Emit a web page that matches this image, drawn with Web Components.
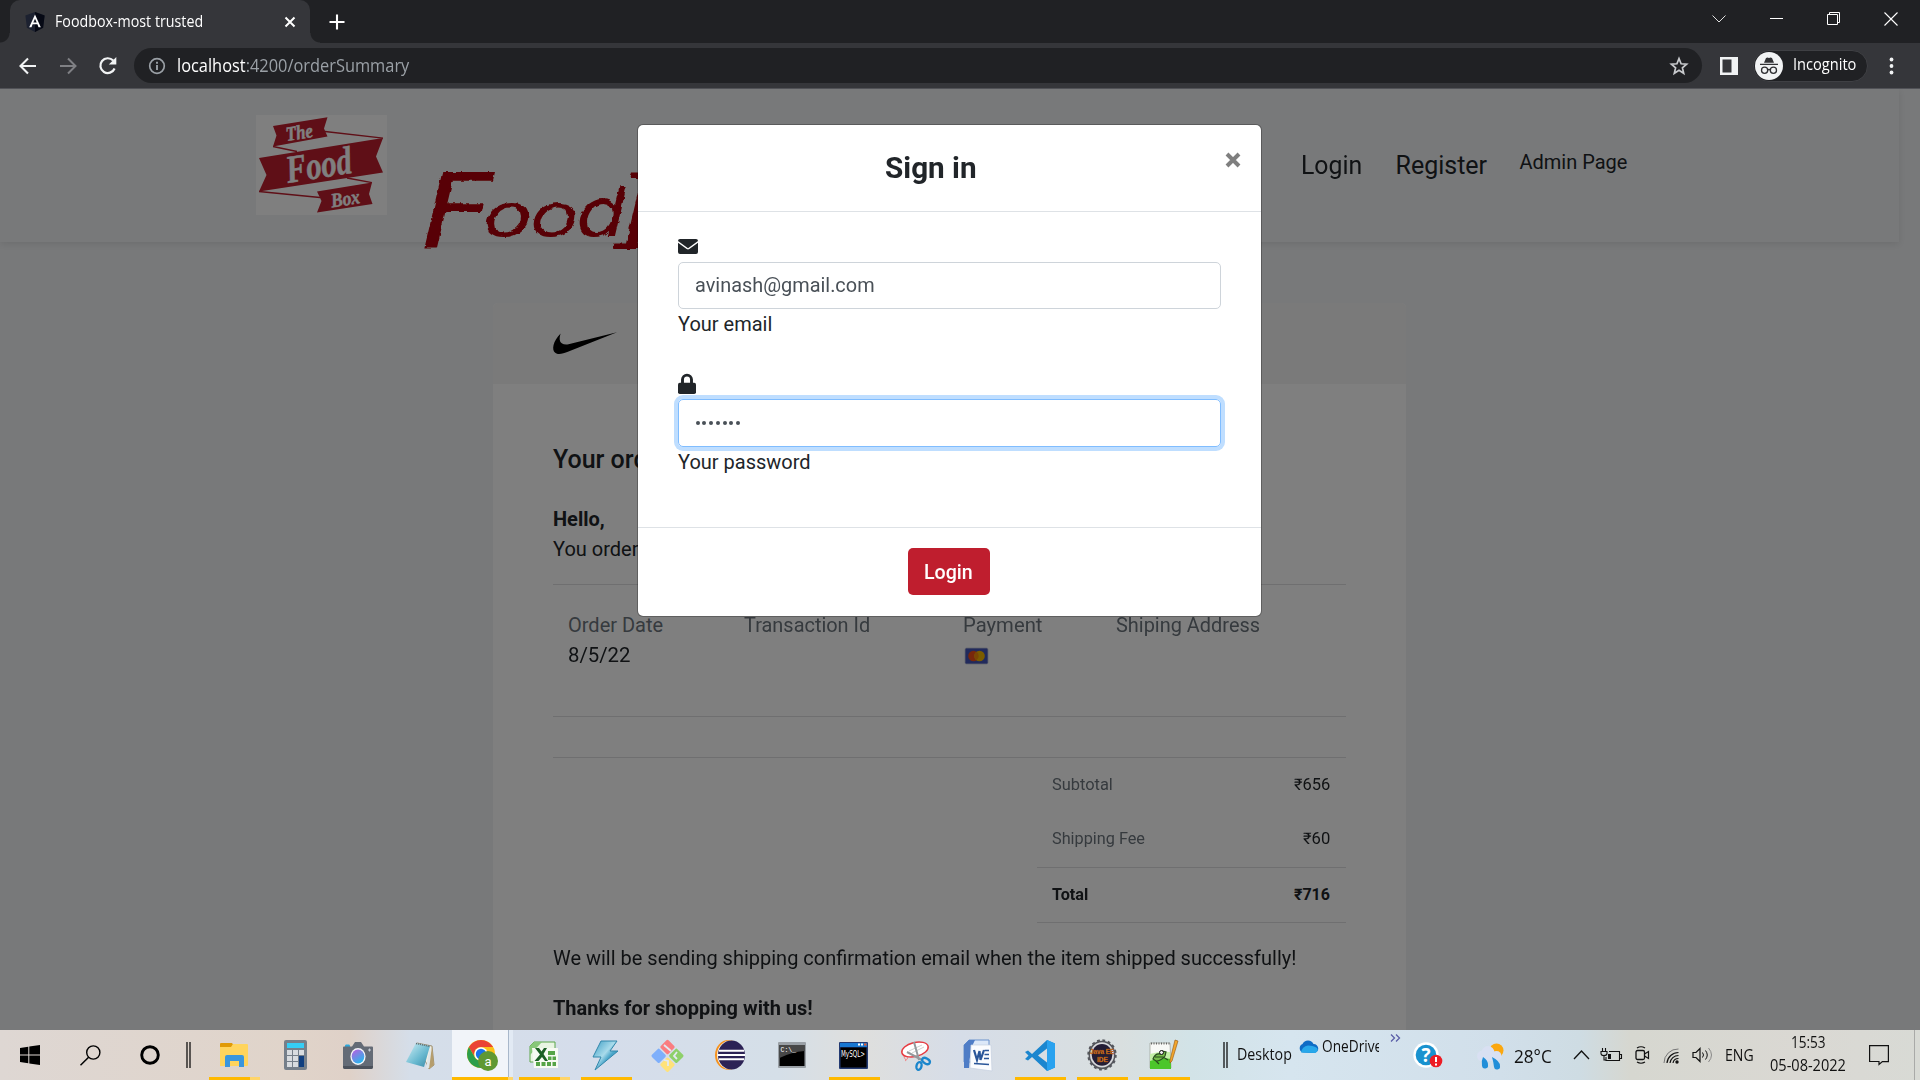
<!DOCTYPE html>
<html lang="en">
<head>
<meta charset="utf-8">
<title>Foodbox-most trusted</title>
<style>
html,body{margin:0;height:100%;overflow:hidden}
body{font-family:Roboto,"Liberation Sans",sans-serif;color:#212529;font-size:20px;line-height:30px}
</style>
</head>
<body>
<desktop-screen></desktop-screen>
<script>
const define = (tag, html, extra) => customElements.define(tag, class extends HTMLElement {
  constructor() {
    super();
    this.attachShadow({ mode: 'open' }).innerHTML = html;
  }
  connectedCallback() { if (extra) extra(this, this.shadowRoot); }
});

/* Text that is scaled horizontally to a set width; without a width it keeps its own. */
define('fit-text', `<style>:host{display:block;white-space:nowrap}span{display:inline-block;transform-origin:0 50%}</style><span><slot></slot></span>`,
  (el, root) => {
    if (!el.hasAttribute('w')) return;
    const w = parseFloat(el.getAttribute('w'));
    el.style.width = w + 'px';
    const s = root.querySelector('span');
    const fit = () => { const n = s.offsetWidth; if (n) s.style.transform = `scaleX(${w / n})`; };
    queueMicrotask(fit);
    fit();
    addEventListener('load', fit);
  });

const ICONS = {
  angular: [20, 20, `<path d="M10 0l9.6 3.4-1.5 12.4L10 20l-8.100-4.200L.4 3.400z" fill="#1c2130"/><path d="M10 0l9.600 3.400-1.500 12.400L10 20z" fill="#060914"/><path d="M10 2.400L4.200 15.200h2.300l1.100-2.900h4.800l1.100 2.900h2.300zM10 6.700l1.700 3.800H8.300z" fill="#fff" fill-rule="evenodd"/>`],
  close: [12, 12, `<path d="M1.500 1.500l9 9m0-9l-9 9" stroke="#fff" stroke-width="2"/>`],
  plus: [16, 16, `<path d="M8 .5v15M.5 8h15" stroke="#fff" stroke-width="2.100"/>`],
  back: [18, 18, `<path d="M17 9H2m7-7.500L1.500 9 9 16.500" stroke="#f1f3f4" stroke-width="2.100" fill="none"/>`],
  forward: [18, 18, `<path d="M1 9h15M9 1.500L16.500 9 9 16.500" stroke="#7f8084" stroke-width="2" fill="none"/>`],
  reload: [20, 20, `<path d="M16.600 12.500A7.400 7.400 0 1 1 15.200 4.600" stroke="#f1f3f4" stroke-width="2.200" fill="none"/><path d="M18.300 1v7.500h-7.500z" fill="#f1f3f4"/>`],
  info: [18, 18, `<circle cx="9" cy="9" r="7.300" fill="none" stroke="#9aa0a6" stroke-width="1.700"/><path d="M9 8v5M9 4.700v2" stroke="#9aa0a6" stroke-width="1.900"/>`],
  star: [20, 20, `<path d="M10 2.600l2.100 5.200 5.500.4-4.200 3.600 1.300 5.500-4.700-3-4.700 3 1.300-5.500-4.200-3.600 5.500-.4z" fill="none" stroke="#c8cacd" stroke-width="1.700"/>`],
  panel: [18, 18, `<rect width="18" height="18" fill="#f1f3f4"/><rect x="2.500" y="2.500" width="9" height="13" fill="#35363a"/>`],
  incognito: [28, 28, `<circle cx="14" cy="14" r="14" fill="#f1f3f4"/><path d="M5 11.700h18v1.400H5zM9 10.800L11 6l1.500-.6L14 6l1.500-.600L17 6l2 4.800z" fill="#303134"/><g fill="none" stroke="#303134" stroke-width="1.300"><circle cx="9.600" cy="18.300" r="3.100"/><circle cx="18.400" cy="18.300" r="3.100"/><path d="M12.600 18q1.400-1 2.800 0"/></g>`],
  dots: [5, 18, `<g fill="#f1f3f4"><circle cx="2.500" cy="2.500" r="1.900"/><circle cx="2.500" cy="9" r="1.900"/><circle cx="2.500" cy="15.500" r="1.900"/></g>`],
  down: [14, 8, `<path d="M.5.500L7 7 13.500.5" stroke="#e0e0e0" fill="none"/>`],
  min: [13, 13, `<path d="M0 6.500h13" stroke="#fff"/>`],
  max: [13, 13, `<path d="M.5 2.500h10v10H.5zM2.500 2.500v-2h10v10h-2" stroke="#fff" fill="none"/>`],
  winclose: [14, 14, `<path d="M.5.500l13 13m0-13l-13 13" stroke="#fff" stroke-width="1.100"/>`],
  envelope: [20, 15, `<path d="M2 0h16q2 0 2 2L10 9.300 0 2Q0 0 2 0zM0 3.700l8.700 6.400q1.300.8 2.600 0L20 3.700V13q0 2-2 2H2q-2 0-2-2z" fill="#212529"/>`],
  lock: [18, 20, `<path d="M4.500 9V5.600a4.500 4.500 0 0 1 9 0V9" fill="none" stroke="#212529" stroke-width="2.900"/><rect y="8.800" width="18" height="11.200" rx="1.800" fill="#212529"/>`],
  nike: [64, 23, `<path d="M64 .2L15.500 19.500C9.500 22 5 23 2.200 20.800-1.500 17.800-.2 9.500 7.600 1.500 5.500 8 6.500 13.500 15.500 12.300z" fill="#000"/>`],
  card: [23, 16, `<rect width="23" height="16" rx="1.500" fill="#4355b8" stroke="#c8cad8" stroke-width=".8"/><circle cx="8.500" cy="8" r="5.300" fill="#f04e18"/><circle cx="14.500" cy="8" r="5.300" fill="#f6b800"/><path d="M11.500 3.700a5.300 5.300 0 0 1 0 8.600 5.300 5.300 0 0 1 0-8.600" fill="#f48a08"/>`],
  logo: [131, 100, `<rect width="131" height="100" fill="#fff"/><g fill="#bf1e2e"><path d="M17 11L71.500 2.300 68 13.500 71.500 21.500 17 31.500 20.500 20.500z"/><path d="M3 43L127 23 120 41.500 127 57.500 3 76.500 10.500 60z"/><path d="M61 76.500L116 67.500 113 79 116.500 89 61 97.500 65.500 86z"/></g><path d="M69 16.500L127 23.200M17 31.500l24 5M3 76.500l61 6M91 63l25 4.700" stroke="#bf1e2e" stroke-width="1.300" fill="none"/><g fill="#fff" stroke="#fff" stroke-width=".5" font-family="Liberation Serif" font-weight="700" font-style="italic"><text transform="translate(31 26) rotate(-9)" font-size="20" textLength="27" lengthAdjust="spacingAndGlyphs">The</text><text transform="translate(32 68) rotate(-9)" font-size="39" textLength="66" lengthAdjust="spacingAndGlyphs">Food</text><text transform="translate(76 92.500) rotate(-9)" font-size="20" textLength="29" lengthAdjust="spacingAndGlyphs">Box</text></g>`],
  brand: [230, 110, `<defs><filter id="rough" x="-5%" y="-5%" width="110%" height="110%"><feTurbulence type="fractalNoise" baseFrequency=".14" numOctaves="2" seed="4"/><feDisplacementMap in="SourceGraphic" scale="4" xChannelSelector="R" yChannelSelector="G"/></filter></defs><g filter="url(#rough)" font-family="DejaVu Sans" font-style="oblique" fill="#b00408"><text transform="translate(-3 90) scale(1.200 1)" font-size="105">F</text><text transform="translate(59 77) scale(1.360 1)" font-size="59"><tspan x="0 34.500">oo</tspan></text><text transform="translate(152 77) scale(1.200 1)" font-size="66">d</text><text transform="translate(191 90) scale(1.200 1)" font-size="105" font-family="DejaVu Serif" font-style="italic">B</text></g>`],
  windows: [20, 20, `<path d="M0 3l8.300-1.200V9.500H0zM9.300 1.600L20 0v9.500H9.300zM0 10.500h8.300v7.800L0 17zM9.300 10.500H20V20L9.300 18.400z" fill="#000"/>`],
  search: [21, 21, `<circle cx="13.300" cy="7.500" r="6.600" fill="none" stroke="#000" stroke-width="1.400"/><path d="M8.600 12.300L.5 20.300" stroke="#000" stroke-width="1.500"/>`],
  cortana: [20, 20, `<circle cx="10" cy="10" r="8.300" fill="none" stroke="#000" stroke-width="2.900"/>`],
  bars: [5, 26, `<path d="M1 0v26M4 0v26" stroke="#000" stroke-width="1.200"/>`],
  explorer: [28, 24, `<path d="M0 1q0-1 1-1h11l2 3-2 2H0z" fill="#e09a06"/><path d="M0 4h11l2-3h14q1 0 1 1v20q0 1-1 1H0z" fill="#ffd45c"/><path d="M5 24V14q0-2 2-2h15q2 0 2 2v10h-5v-6h-9v6z" fill="#3a96dd"/>`],
  calc: [23, 30, `<rect width="23" height="30" rx="2" fill="#757f8a"/><rect x="3" y="3" width="17" height="5" fill="#35cdf5"/><path d="M3 10h5v5H3zM9 10h5v5H9zM15 10h5v5h-5zM3 16h5v5H3zM9 16h5v5H9zM3 22h5v5H3zM9 22h5v5H9z" fill="#d8dce0"/><path d="M15 16h5v11h-5z" fill="#103f80"/>`],
  camera: [30, 27, `<path d="M2 6V4q0-1.500 1-1.500h3Q7 2.500 7 4v2z" fill="#2ba8dc"/><path d="M1 4.500h8L12 0h6l3 4.500h8q1 0 1 1V25q0 2-2 2H2q-2 0-2-2V5.500q0-1 1-1z" fill="#646b76"/><path d="M0 24h30v1q0 2-2 2H2q-2 0-2-2z" fill="#4c525c"/><ellipse cx="15" cy="14.500" rx="7.600" ry="8.500" fill="#f4f5f8"/><ellipse cx="15" cy="14.500" rx="6.300" ry="7" fill="url(#cg)"/><path d="M25 8h3M26.500 6.500v3" stroke="#c5cbd5"/><defs><linearGradient id="cg" x2=".6" y2="1"><stop stop-color="#c05be0"/><stop offset="1" stop-color="#2ab5ec"/></linearGradient></defs>`],
  notepad: [28, 27, `<path d="M11 1l15 3 2 19-5 4z" fill="#f3f0e4" stroke="#8b7b58" stroke-width=".8"/><path d="M24 4l3 19-5 3.500-2-1z" fill="#dfe6e8"/><path d="M26 4l2 19-5 4z" fill="#b59d6c"/><path d="M10 1l14 3-6 21L0 20z" fill="url(#ng)"/><path d="M10 1.500l14 3" stroke="#5e686c" stroke-width="1.500" stroke-dasharray="1 1"/><defs><linearGradient id="ng" x2="1" y2="1"><stop stop-color="#d2f0f6"/><stop offset=".6" stop-color="#67b8cf"/><stop offset="1" stop-color="#3a89a5"/></linearGradient></defs>`],
  chrome: [31, 31, `<circle cx="14" cy="14" r="14" fill="#fbc116"/><path d="M1.900 7A14 14 0 0 1 26.100 7H14a7 7 0 0 0-6.500 9.500z" fill="#ea4335"/><path d="M1.900 7A14 14 0 0 0 14 28l6-10.500a7 7 0 0 1-12.100 0z" fill="#2c9e4b"/><circle cx="14" cy="14" r="6.700" fill="#fff"/><circle cx="14" cy="14" r="5.200" fill="#1a73e8"/><circle cx="21" cy="21" r="10" fill="#5f9832"/><text x="21" y="25.500" text-anchor="middle" font-family="Roboto" font-size="13" fill="#fff">a</text>`],
  excel: [28, 27, `<path d="M4 0h21v20H0V4z" fill="#e9f5e3" stroke="#5ca74b"/><path d="M4 0h8L0 13V4z" fill="#87c779"/><path d="M2 6h26v20H4z" fill="#f7faf3"/><path d="M18 9h7v4h-7zM18 14.500h3.500v3.500H18zM22.500 14.500H26V18h-3.500zM6 20h4v4H6zM11.500 20h4v4h-4zM17 20h4v4h-4zM22.500 20H26v4h-3.500z" fill="#56a447"/><path d="M5 6l5 6.500L4.500 19h4l3.500-4 3 4h3l-4.500-7L17 6h-3l-2.500 3.500L9 6z" fill="#1c5f25"/>`],
  bolt: [25, 29, `<path d="M8 0h16l-7 10h8L2 29l6-13H0z" fill="url(#bg)" stroke="#3287ab" stroke-width="1"/><defs><linearGradient id="bg" x2="1" y2="1"><stop stop-color="#3a9cc4"/><stop offset=".45" stop-color="#a9dbeb"/><stop offset=".6" stop-color="#4aa5c9"/><stop offset="1" stop-color="#2b87b2"/></linearGradient></defs>`],
  git: [31, 31, `<g transform="rotate(45 15.500 15.500)"><rect x="4" y="4" width="11" height="11" rx="1.500" fill="#fa7d80"/><rect x="16.500" y="4" width="11" height="11" rx="1.500" fill="#8ed06a"/><rect x="4" y="16.500" width="11" height="11" rx="1.500" fill="#7eaffb"/><rect x="16.500" y="16.500" width="11" height="11" rx="1.500" fill="#ffe27a"/></g><path d="M12 5l7 6M25 12l-3 4 3 3M12 20l4 1v5" fill="none" stroke="#e3e9f2" stroke-width="1.800"/>`],
  eclipse: [30, 30, `<ellipse cx="13.500" cy="15" rx="13.500" ry="15" fill="#f7931e"/><ellipse cx="15.500" cy="15" rx="13.500" ry="14.500" fill="#eee"/><ellipse cx="16.500" cy="15" rx="13.500" ry="14.500" fill="#2c2255"/><path d="M4 10.700h25M3 15h27M4 19.300h25" stroke="#fff" stroke-width="2"/>`],
  cmd: [28, 26, `<rect width="28" height="26" rx="1" fill="#9aa0a6"/><rect x="1.500" y="3" width="25" height="21" fill="#000"/><path d="M1.500 3h25v6q-13 1-25 7z" fill="#474747"/><text x="2.500" y="9.500" font-family="Liberation Mono" font-size="6.500" fill="#fff">C:\\_</text>`],
  mysql: [29, 27, `<rect width="29" height="27" rx="1" fill="#233a72"/><rect x="1" y="1" width="27" height="4" fill="#1877d1"/><path d="M19 2.500h2M22 2.500h2" stroke="#fff" stroke-width="2"/><path d="M25 2.500h2.500" stroke="#e65a2e" stroke-width="2"/><rect x="1.500" y="5.500" width="26" height="20" fill="#000"/><text x="2" y="14.500" font-family="DejaVu Sans" font-size="8" fill="#fff" textLength="24" lengthAdjust="spacingAndGlyphs">MySQL&gt;</text>`],
  snip: [28, 29, `<g fill="none"><path d="M4 19Q0 15 4 13 8 17 3 20" stroke="#ef8a8a"/><ellipse cx="13" cy="8.500" rx="13.500" ry="7" transform="rotate(-14 13 8.500)" fill="#fff" stroke="#e63c43" stroke-width="1.500"/><path d="M7 10l13-6M10 12l12-6" stroke="#d1d1d1"/><path d="M12 1l5 18M5 11l15 8" stroke="#94999d" stroke-width="2"/><ellipse cx="17" cy="25" rx="2.500" ry="4" stroke="#1b86cc" stroke-width="2.300" transform="rotate(15 17 25)"/><ellipse cx="24" cy="20" rx="4.200" ry="2.500" stroke="#1b86cc" stroke-width="2.300" transform="rotate(30 24 20)"/></g>`],
  word: [28, 31, `<path d="M5 0h20v22H0V5z" fill="#dce8f8" stroke="#6a92cd"/><path d="M5 0h6Q6 8 5 28H0V5z" fill="#4f7dc6"/><path d="M7 5h20l1 26-22-3z" fill="#fbfcfe" stroke="#c6d0df" stroke-width=".7"/><path d="M10 10l1.500 5 1.500 5 2.500-9 1 9 3.500-10" fill="none" stroke="#2a5699" stroke-width="2.200"/><path d="M20.500 10.500H25M20.500 14.500H25M20 18.500h5M10 23.500l15 1" stroke="#2a5699" stroke-width="1.600"/>`],
  vscode: [30, 31, `<path d="M22 0l8 3.500v24L22 31 7 17 3 20.500 0 19l3.500-3.500L0 12l3-1.500L7 14zM22 8.500l-9 7 9 7z" fill="#1b86cf" fill-rule="evenodd"/><path d="M22 0l8 3.500v24L22 31z" fill="#29a2ef"/>`],
  javaee: [30, 32, `<g transform="scale(1 1.060)"><circle cx="15" cy="15" r="12.700" fill="#d8d9db" stroke="#54565c" stroke-width="1.500"/><circle cx="15" cy="15" r="13.700" fill="none" stroke="#54565c" stroke-width="2" stroke-dasharray="2.800 2.580"/><circle cx="15" cy="15" r="10.300" fill="#231d35"/></g><g font-family="Liberation Sans" font-weight="700" font-size="8" fill="#f58a28" stroke="#8c4208" stroke-width=".3"><text x="3" y="15" textLength="24" lengthAdjust="spacingAndGlyphs">Java EE</text><text x="10" y="22.500" textLength="11" lengthAdjust="spacingAndGlyphs">IDE</text></g>`],
  npp: [29, 30, `<path d="M1 3h20l1 25H1z" fill="#f8f9f6" stroke="#a2a7a0" stroke-width=".8"/><path d="M2 3.500h19" stroke="#666" stroke-dasharray="1 1.500" stroke-width="2"/><path d="M1 20q11-3 21-2v11H1z" fill="#4cc62a"/><path d="M1 14q11-3 20-2l1 7Q11 17 1 21z" fill="#c4efa8"/><path d="M4 19q2-6 7-5l2-3 4 1-1 4q-4 5-9 5zM7 21l3 3M14 17l5 3M6 17h8" fill="#77bd4c" stroke="#274b1d" stroke-width="1.200"/><circle cx="12.500" cy="12.500" r="2" fill="#eee" stroke="#111"/><path d="M26 0l3 1-6 20-2 2v-3z" fill="#f2a62c" stroke="#93530e" stroke-width=".6"/>`],
  cloud: [20, 13, `<path d="M5 12.500a4.500 4.500 0 0 1-.5-8.500A6 6 0 0 1 15.500 4 4.500 4.500 0 0 1 16 13z" fill="#0f6cc5"/><path d="M3 12.500q1-6 7-7 6 0 9 2.500 2 3-2 5z" fill="#28a8ea"/>`],
  more: [11, 8, `<path d="M1 .5L4.500 4 1 7.500M6 .5L9.500 4 6 7.500" fill="none" stroke="#5b5fa8" stroke-width="1.300"/>`],
  help: [30, 28, `<circle cx="13" cy="13" r="12.700" fill="#fff"/><circle cx="13" cy="13" r="10.300" fill="#1992cf"/><text x="13" y="20" text-anchor="middle" font-family="Open Sans" font-weight="700" font-size="19" fill="#fff">?</text><circle cx="23" cy="19" r="6.300" fill="#ed1c24"/><path d="M23 15v5M23 21.500v2" stroke="#fff" stroke-width="2"/>`],
  weather: [28, 27, `<circle cx="19.500" cy="7.500" r="7" fill="#fba70e"/><g fill="#d9e0f2"><circle cx="5.500" cy="13" r="5.500"/><circle cx="11" cy="9.500" r="6.500"/><circle cx="19.500" cy="13" r="5"/><path d="M5 11h15v7H5z"/></g><path d="M6 14q5 3 5 8a3 3 0 0 1-6 1q-1-5 1-9zM15 14q8 4 8 9a3 3 0 0 1-6 1q-.500-5-2-10z" fill="#218fd9"/>`],
  caret: [17, 10, `<path d="M1 9l7.500-8L16 9" stroke="#111" stroke-width="1.300" fill="none"/>`],
  battery: [21, 14, `<path d="M8 3.500h10.500v9H5V9M19 6.500h1.500v4H19M1.500 0v3M4.500 0v3M0 3.500h6v2q0 2-3 2t-3-2zM3 7.500V12h2" stroke="#111" stroke-width="1.100" fill="none"/><path d="M7 6h3v5H7z" fill="#111"/>`],
  meet: [15, 18, `<rect x="1" y="4.500" width="8.500" height="9" rx="1.500" fill="none" stroke="#111" stroke-width="1.300"/><path d="M9.500 8l4-2.500v7l-4-2.500M2 2q4-2.500 8 0M2 16q4 2.500 8 0" fill="none" stroke="#111" stroke-width="1.200"/>`],
  wifi: [17, 16, `<g fill="none" stroke="#111"><path d="M1 15A14 14 0 0 1 15.500 1" stroke="#777"/><path d="M4 15A11.500 11.500 0 0 1 15.500 4.500M7 15a8.500 8.500 0 0 1 8.500-7.500M10 15a5.500 5.500 0 0 1 5.500-4.500" stroke-width="1.200"/></g><circle cx="14" cy="14" r="1.700" fill="#111"/>`],
  volume: [21, 16, `<path d="M1 5.500h3l4-4v13l-4-4H1z" stroke="#111" fill="none" stroke-width="1.200"/><path d="M10.500 5.500q2 2.500 0 5M13.500 3.500q3.500 4.500 0 9" stroke="#111" fill="none"/><path d="M16.500 1q6 7 0 14" stroke="#888" fill="none"/>`],
  notify: [20, 20, `<path d="M.6.600h18.800v16h-6L10 19.500v-3H.6z" stroke="#111" stroke-width="1.200" fill="none"/>`]
};

define('ui-icon', `<style>:host{display:block;flex:none}svg{display:block;overflow:visible}</style>`, (el, root) => {
  const [w, h, d] = ICONS[el.getAttribute('name')];
  if (!root.querySelector('svg')) root.innerHTML += `<svg width="${w}" height="${h}" viewBox="0 0 ${w} ${h}">${d}</svg>`;
});

define('browser-chrome', `<style>
:host{display:block;flex:none;font-family:"Open Sans","Noto Sans",sans-serif;color:#fff}
.strip{height:43px;background:#202124;display:flex;align-items:flex-start;justify-content:space-between}
.left,.controls{display:flex;align-items:center}
.tab{margin-left:10px;width:300px;height:43px;box-sizing:border-box;background:#35363a;border-radius:10px 10px 0 0;display:flex;align-items:center;padding:0 15px}
.left{background:radial-gradient(circle at 0 0,transparent 9px,#35363a 10px) 0 33px/10px 10px no-repeat,radial-gradient(circle at 100% 0,transparent 9px,#35363a 10px) 310px 33px/10px 10px no-repeat}
.tab fit-text{margin-left:10px;font-size:15.500px;line-height:40px;height:42px}
.tab .x{margin-left:auto}
.plus{margin-left:19px}
.controls{height:37px;padding-right:22px}
.bar{height:45px;background:#35363a;display:flex;align-items:center;border-bottom:1px solid #515257}
.omni{margin-left:16px;width:1568px;height:35px;border-radius:18px;background:#202124;display:flex;align-items:center;box-sizing:border-box;padding:0 13px 0 14px}
.omni fit-text{margin-left:11px;font-size:19px;line-height:34px;height:36px;color:#9aa0a6}
b{font-weight:400;color:#fff}
.pill{margin-left:15px;width:115px;height:32px;border:1px solid #3f4044;box-sizing:border-box;border-radius:17px;background:#202124;display:flex;align-items:center;padding-left:1px}
.pill fit-text{margin-left:10px;font-size:16px;line-height:29px;height:32px}
</style>
<div class="strip"><div class="left"><div class="tab"><ui-icon name="angular"></ui-icon><fit-text w="148">Foodbox-most trusted</fit-text><ui-icon class="x" name="close" style="margin-right:-1px"></ui-icon></div><ui-icon class="plus" name="plus"></ui-icon></div>
<div class="controls"><ui-icon name="down"></ui-icon><ui-icon name="min" style="margin-left:44px"></ui-icon><ui-icon name="max" style="margin-left:44px"></ui-icon><ui-icon name="winclose" style="margin-left:44px"></ui-icon></div></div>
<div class="bar"><ui-icon name="back" style="margin-left:19px"></ui-icon><ui-icon name="forward" style="margin-left:22px"></ui-icon><ui-icon name="reload" style="margin-left:21px"></ui-icon>
<div class="omni"><ui-icon name="info"></ui-icon><fit-text w="232"><b>localhost</b>:4200/orderSummary</fit-text><ui-icon name="star" style="margin-left:auto"></ui-icon></div>
<ui-icon name="panel" style="margin-left:18px"></ui-icon><div class="pill"><ui-icon name="incognito"></ui-icon><fit-text w="63">Incognito</fit-text></div><ui-icon name="dots" style="margin-left:21px"></ui-icon></div>`);

define('site-navbar', `<style>
:host{display:flex;box-sizing:border-box;width:1899px;height:153px;padding:26px 0 0 256px;background:#f1f3f5;box-shadow:0 2px 8px rgba(0,0,0,.1);flex:none}
.brand{margin:44px 0 0 37px}
nav{display:flex;margin:-26px 0 0 647px;font-size:25px;line-height:38px;padding-top:58px}
fit-text+fit-text{margin-left:33px}
nav fit-text.small{font-size:20px;margin:-4px 0 0 32px}
</style><ui-icon name="logo"></ui-icon><ui-icon class="brand" name="brand"></ui-icon><nav><fit-text w="61.500">Login</fit-text><fit-text w="92">Register</fit-text><fit-text class="small" w="108">Admin Page</fit-text></nav>`);

define('order-card', `<style>
:host{display:block;width:913px;margin:61px 0 0 493px;background:#fff;border-radius:5px 5px 0 0;flex:none}
header{height:81px;background:#f5f5f5;border-radius:5px 5px 0 0;padding:29px 60px 0;box-sizing:border-box}
main{padding:61px 60px 30px}
.title{font-size:25px;font-weight:500;margin-bottom:29px}
.b{font-weight:700}
hr{border:0;height:1px;background:#dedfe0;margin:0}
.grid{display:flex;padding:25px 15px 0;height:60px;margin-bottom:46px}
.m{color:#6c757d}
.totals{margin-left:484px;font-size:16px}
.row{display:flex;justify-content:space-between;padding:0 16px 0 15px;line-height:54px;height:54px}
</style><header><ui-icon name="nike"></ui-icon></header><main>
<div class="title"><fit-text>Your order</fit-text></div>
<fit-text class="b" w="52">Hello,</fit-text><fit-text>You ordered</fit-text>
<hr style="margin-top:20px"><div class="grid">
<div style="width:176px"><fit-text class="m" w="95">Order Date</fit-text><fit-text w="62">8/5/22</fit-text></div>
<div style="width:219px"><fit-text class="m" w="126.500">Transaction Id</fit-text></div>
<div style="width:152.500px"><fit-text class="m" w="79">Payment</fit-text><ui-icon name="card" style="margin:8px 0 0 2px"></ui-icon></div>
<div><fit-text class="m" w="144.500">Shiping Address</fit-text></div></div>
<hr><hr style="margin-top:40px"><div class="totals">
<div class="row"><fit-text class="m" w="60.500">Subtotal</fit-text><fit-text w="36">₹656</fit-text></div>
<div class="row"><fit-text class="m" w="93.500">Shipping Fee</fit-text><fit-text w="27">₹60</fit-text></div>
<hr style="margin-top:1px"><div class="row b"><fit-text w="36.500">Total</fit-text><fit-text w="36">₹716</fit-text></div><hr></div>
<fit-text w="743.500" style="margin-top:20px">We will be sending shipping confirmation email when the item shipped successfully!</fit-text>
<fit-text class="b" w="259.500" style="margin-top:20px">Thanks for shopping with us!</fit-text></main>`);

define('sign-in-modal', `<style>
:host{display:block;box-sizing:border-box;width:625px;height:493px;background:#fff;border:1px solid rgba(0,0,0,.25);background-clip:padding-box;border-radius:6px}
header{height:87px;box-sizing:border-box;border-bottom:1px solid #dee2e6;display:flex}
.t{font-size:30px;font-weight:700;line-height:45px;margin:20px 0 0 247px}
main{height:316px;box-sizing:border-box;padding:27px 40px 0;border-bottom:1px solid #dee2e6}
.in{box-sizing:border-box;height:47px;border:1px solid #ced4da;border-radius:5px;padding:0 15.500px;line-height:45px;color:#495057}
.focus{height:48px;border:1px solid #80bdff;box-shadow:0 0 0 4px #bfdeff;display:flex;align-items:center;gap:2.750px;padding:0 16.500px}
.focus i{width:4px;height:4px;border-radius:50%;background:#495057}
footer{display:flex;justify-content:center;padding:20px 2px 0 0}
button{font:500 20px/30px Roboto,sans-serif;color:#fff;background:#bf1e2e;border:0;border-radius:5px;width:82px;height:47px;padding:0 16.500px}
</style><header><fit-text class="t" w="92">Sign in</fit-text><svg width="16" height="16" viewBox="0 0 16 16" style="margin:27px 0 0 248px"><path d="M2 2l12 12M14 2L2 14" stroke="#7f7f7f" stroke-width="4"/></svg></header>
<main><ui-icon name="envelope"></ui-icon><div class="in" style="margin-top:8px"><fit-text w="180">avinash@gmail.com</fit-text></div><fit-text w="94">Your email</fit-text>
<ui-icon name="lock" style="margin-top:35px"></ui-icon><div class="in focus" style="margin-top:5px"><i></i><i></i><i></i><i></i><i></i><i></i><i></i></div><fit-text w="133">Your password</fit-text></main>
<footer><button><fit-text w="49">Login</fit-text></button></footer>`);

define('web-page', `<style>
:host{display:flex;flex-direction:column;flex:1;min-height:0;overflow:hidden;position:relative;background:#f1f3f5}
.backdrop{position:absolute;inset:0;background:rgba(0,0,0,.5)}
sign-in-modal{position:absolute;left:637px;top:35px}
</style><site-navbar></site-navbar><order-card></order-card><div class="backdrop"></div><sign-in-modal></sign-in-modal>`);

define('task-button', `<style>
:host{display:flex;flex-direction:column;width:62px;height:50px;box-sizing:border-box;flex:none}
.i{flex:1;display:flex;align-items:center;justify-content:center;padding:3px 3px 0 0}
.u{height:3px;margin:0 6px 0 5px}
:host([open]) .u{background:#ffb900}
:host([multi]) .u{background:linear-gradient(90deg,#ffb900 41px,#ffd56a 41px)}
:host([active]) .i{background:linear-gradient(90deg,#f1f4f9 56px,#a8b7ca 56px,#a8b7ca 57px,#e2eaf4 57px);margin-right:1px;padding-right:0}
:host([active]) .u{margin:0 1px 0 0;background:linear-gradient(90deg,#ffb900 56px,#ffd56a 56px)}
</style><div class="i"><slot></slot></div><div class="u"></div>`);

const apps = [['explorer','multi'],['calc',''],['camera',''],['notepad',''],['chrome','active'],['excel','multi'],['bolt','open'],['git',''],['eclipse',''],['cmd',''],['mysql','open'],['snip',''],['word',''],['vscode','open'],['javaee','open'],['npp','open']];
define('task-bar', `<style>
:host{display:flex;height:50px;flex:none;align-items:center;color:#111;font:15.500px/20px "Open Sans","Noto Sans",sans-serif;
background:linear-gradient(90deg,#ded7d3 0,#e0d4ca 290px,#dfd1c8 350px,#d5dee9 410px,#d5ddeb 600px,#d5dfe8 780px,#dfdfdd 860px,#d6dde8 960px,#d9dfdf 1120px,#d2e3e7 1190px,#d6e5ef 1290px,#d1dfea 1500px,#cedce3 1580px,#d6d7d0 1630px,#dad8d3 1800px,#d8dad5 1920px)}
.clock{width:76px;margin-left:16px;height:50px;padding-top:2px;box-sizing:border-box;display:flex;flex-direction:column;align-items:center;gap:3px}
.cut{width:57px;overflow:hidden;height:22px}
.edge{width:1px;height:50px;background:#a9aaa8;margin-left:25px}
</style>
<ui-icon name="windows" style="margin-left:20px"></ui-icon><ui-icon name="search" style="margin-left:40px"></ui-icon><ui-icon name="cortana" style="margin-left:39px"></ui-icon><ui-icon name="bars" style="margin-left:26px"></ui-icon>
<div style="display:flex;margin-left:13px">${apps.map(a => `<task-button ${a[1]}><ui-icon name="${a[0]}"></ui-icon></task-button>`).join('')}</div>
<ui-icon name="bars" style="margin-left:27px"></ui-icon>
<fit-text w="55" style="margin:-2px 0 0 9px">Desktop</fit-text>
<ui-icon name="cloud" style="margin:0 0 17px 6px"></ui-icon><div class="cut" style="margin:0 0 16px 4px"><fit-text w="60">OneDrive</fit-text></div>
<ui-icon name="more" style="margin:0 0 35px 11px"></ui-icon><ui-icon name="help" style="margin:2px 0 0 12px"></ui-icon>
<ui-icon name="weather" style="margin:2px 0 0 34px"></ui-icon><fit-text w="38" style="margin:1px 0 0 9px;font-size:18.500px">28°C</fit-text>
<ui-icon name="caret" style="margin-left:21px"></ui-icon><ui-icon name="battery" style="margin-left:11px"></ui-icon><ui-icon name="meet" style="margin-left:13px"></ui-icon><ui-icon name="wifi" style="margin:2px 0 0 13px"></ui-icon><ui-icon name="volume" style="margin-left:12px"></ui-icon>
<fit-text w="29" style="margin:-1px 0 0 12px">ENG</fit-text><div class="clock"><fit-text w="35">15:53</fit-text><fit-text w="76">05-08-2022</fit-text></div>
<ui-icon name="notify" style="margin-left:23px"></ui-icon><div class="edge"></div>`);

define('desktop-screen', `<style>:host{display:flex;flex-direction:column;width:1920px;height:1080px;overflow:hidden}</style><browser-chrome></browser-chrome><web-page></web-page><task-bar></task-bar>`);
</script>
</body>
</html>
